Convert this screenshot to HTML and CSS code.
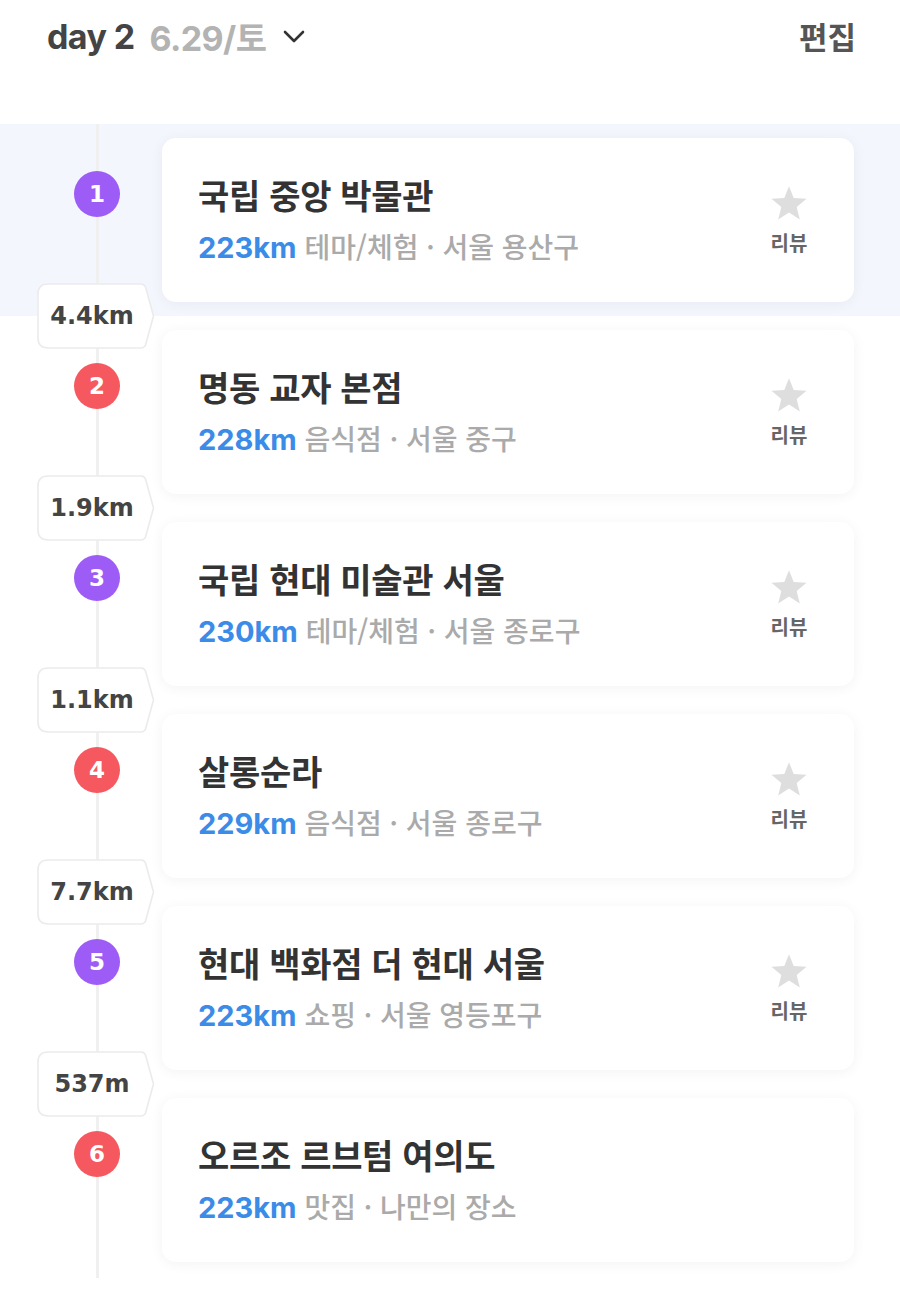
FILE: index.html
```html
<!DOCTYPE html>
<html lang="ko">
<head>
    <meta charset="UTF-8">
    <meta name="viewport" content="width=device-width, initial-scale=1.0">
    <title>day 2 - 일정</title>
    <link rel="stylesheet" href="styles.css">
</head>
<body>
    <header class="topbar">
        <div class="day">
            <span class="day-num">day 2</span>
            <span class="day-date">6.29/토</span>
            <svg class="chevron" width="22" height="14" viewBox="0 0 22 14"><path d="M2 2 L11 11 L20 2" fill="none" stroke="#333" stroke-width="2.6" stroke-linecap="round" stroke-linejoin="round"/></svg>
        </div>
        <a class="edit" href="#">편집</a>
    </header>

    <section class="route">
        <div class="stop active">
            <span class="pin purple">1</span>
            <div class="card">
                <div class="info">
                    <h3>국립 중앙 박물관</h3>
                    <p><b>223km</b> 테마/체험 · 서울 용산구</p>
                </div>
                <div class="review">
                    <svg width="38" height="36" viewBox="0 0 24 23"><path d="M12 0.8 L15 8.3 L23.2 8.8 L16.9 14 L18.9 22 L12 17.6 L5.1 22 L7.1 14 L0.8 8.8 L9 8.3 Z" fill="#dedede"/></svg>
                    <span>리뷰</span>
                </div>
            </div>
        </div>
        <div class="leg"><span class="dist"><svg viewBox="0 0 118 66"><path d="M11 1 H104 Q107 1 108.5 4 L116.5 33 L108.5 62 Q107 65 104 65 H11 Q1 65 1 55 V11 Q1 1 11 1 Z" fill="#fff" stroke="#ebebeb" stroke-width="1.6"/></svg><em>4.4km</em></span></div>

        <div class="stop">
            <span class="pin red">2</span>
            <div class="card">
                <div class="info">
                    <h3>명동 교자 본점</h3>
                    <p><b>228km</b> 음식점 · 서울 중구</p>
                </div>
                <div class="review">
                    <svg width="38" height="36" viewBox="0 0 24 23"><path d="M12 0.8 L15 8.3 L23.2 8.8 L16.9 14 L18.9 22 L12 17.6 L5.1 22 L7.1 14 L0.8 8.8 L9 8.3 Z" fill="#dedede"/></svg>
                    <span>리뷰</span>
                </div>
            </div>
        </div>
        <div class="leg"><span class="dist"><svg viewBox="0 0 118 66"><path d="M11 1 H104 Q107 1 108.5 4 L116.5 33 L108.5 62 Q107 65 104 65 H11 Q1 65 1 55 V11 Q1 1 11 1 Z" fill="#fff" stroke="#ebebeb" stroke-width="1.6"/></svg><em>1.9km</em></span></div>

        <div class="stop">
            <span class="pin purple">3</span>
            <div class="card">
                <div class="info">
                    <h3>국립 현대 미술관 서울</h3>
                    <p><b>230km</b> 테마/체험 · 서울 종로구</p>
                </div>
                <div class="review">
                    <svg width="38" height="36" viewBox="0 0 24 23"><path d="M12 0.8 L15 8.3 L23.2 8.8 L16.9 14 L18.9 22 L12 17.6 L5.1 22 L7.1 14 L0.8 8.8 L9 8.3 Z" fill="#dedede"/></svg>
                    <span>리뷰</span>
                </div>
            </div>
        </div>
        <div class="leg"><span class="dist"><svg viewBox="0 0 118 66"><path d="M11 1 H104 Q107 1 108.5 4 L116.5 33 L108.5 62 Q107 65 104 65 H11 Q1 65 1 55 V11 Q1 1 11 1 Z" fill="#fff" stroke="#ebebeb" stroke-width="1.6"/></svg><em>1.1km</em></span></div>

        <div class="stop">
            <span class="pin red">4</span>
            <div class="card">
                <div class="info">
                    <h3>살롱순라</h3>
                    <p><b>229km</b> 음식점 · 서울 종로구</p>
                </div>
                <div class="review">
                    <svg width="38" height="36" viewBox="0 0 24 23"><path d="M12 0.8 L15 8.3 L23.2 8.8 L16.9 14 L18.9 22 L12 17.6 L5.1 22 L7.1 14 L0.8 8.8 L9 8.3 Z" fill="#dedede"/></svg>
                    <span>리뷰</span>
                </div>
            </div>
        </div>
        <div class="leg"><span class="dist"><svg viewBox="0 0 118 66"><path d="M11 1 H104 Q107 1 108.5 4 L116.5 33 L108.5 62 Q107 65 104 65 H11 Q1 65 1 55 V11 Q1 1 11 1 Z" fill="#fff" stroke="#ebebeb" stroke-width="1.6"/></svg><em>7.7km</em></span></div>

        <div class="stop">
            <span class="pin purple">5</span>
            <div class="card">
                <div class="info">
                    <h3>현대 백화점 더 현대 서울</h3>
                    <p><b>223km</b> 쇼핑 · 서울 영등포구</p>
                </div>
                <div class="review">
                    <svg width="38" height="36" viewBox="0 0 24 23"><path d="M12 0.8 L15 8.3 L23.2 8.8 L16.9 14 L18.9 22 L12 17.6 L5.1 22 L7.1 14 L0.8 8.8 L9 8.3 Z" fill="#dedede"/></svg>
                    <span>리뷰</span>
                </div>
            </div>
        </div>
        <div class="leg"><span class="dist"><svg viewBox="0 0 118 66"><path d="M11 1 H104 Q107 1 108.5 4 L116.5 33 L108.5 62 Q107 65 104 65 H11 Q1 65 1 55 V11 Q1 1 11 1 Z" fill="#fff" stroke="#ebebeb" stroke-width="1.6"/></svg><em>537m</em></span></div>

        <div class="stop">
            <span class="pin red">6</span>
            <div class="card">
                <div class="info">
                    <h3>오르조 르브텀 여의도</h3>
                    <p><b>223km</b> 맛집 · 나만의 장소</p>
                </div>
            </div>
        </div>
    </section>
</body>
</html>
```

FILE: styles.css
```css
* {
    box-sizing: border-box;
}

body {
    font-family: 'Noto Sans CJK KR', 'Noto Sans', sans-serif;
    margin: 0;
    padding: 0;
    background: #fff;
    color: #333;
}

.topbar {
    height: 124px;
    padding: 14px 44px 0 47px;
    display: flex;
    justify-content: space-between;
    align-items: flex-start;
}

.day {
    display: flex;
    align-items: center;
    gap: 15px;
    height: 44px;
}

.day-num,
.day-date {
    font-family: Inter, 'Noto Sans CJK KR', sans-serif;
    font-size: 34px;
    font-weight: 700;
    letter-spacing: -0.6px;
}

.day-num { color: #444; }
.day-date { color: #b3b3b3; }

.chevron {
    margin-left: 2px;
    margin-top: 2px;
}

.edit {
    font-size: 31px;
    font-weight: 700;
    color: #555;
    text-decoration: none;
    line-height: 44px;
}

.route {
    position: relative;
    padding-bottom: 36px;
}

.route::before {
    content: '';
    position: absolute;
    left: 96px;
    top: 0;
    width: 3px;
    height: 1154px;
    background: #f0f0f0;
}

.stop {
    display: flex;
    align-items: flex-start;
    padding: 14px 46px 14px 74px;
}

.stop.active {
    background: #f3f6fd;
}

.pin {
    position: relative;
    z-index: 1;
    width: 46px;
    height: 46px;
    margin-top: 33px;
    margin-right: 42px;
    flex-shrink: 0;
    border-radius: 50%;
    color: #fff;
    font-family: 'DejaVu Sans', sans-serif;
    font-weight: 700;
    font-size: 23px;
    display: flex;
    align-items: center;
    justify-content: center;
}

.purple { background: #9d5cf5; }
.red { background: #f6585f; }

.card {
    flex: 1;
    height: 164px;
    background: #fff;
    border-radius: 14px;
    box-shadow: 0 2px 14px rgba(0, 0, 0, 0.05);
    display: flex;
    align-items: center;
    justify-content: space-between;
    padding: 0 30px 0 36px;
}

.info h3 {
    margin: 0 0 12px;
    font-size: 34px;
    line-height: 42px;
    font-weight: 600;
    color: #333;
    letter-spacing: -0.3px;
}

.info p {
    margin: 0;
    font-size: 28px;
    line-height: 36px;
    color: #aaa;
    font-weight: 500;
}

.info b {
    font-family: Inter, 'Noto Sans CJK KR', sans-serif;
    color: #3a8ce8;
    font-weight: 700;
    font-size: 29px;
}

.review {
    width: 70px;
    display: flex;
    flex-direction: column;
    align-items: center;
    gap: 8px;
    margin-top: 2px;
}

.review span {
    font-size: 20px;
    line-height: 28px;
    font-weight: 700;
    color: #666;
}

.leg {
    height: 0;
    display: flex;
    align-items: center;
    padding-left: 37px;
}

.dist {
    position: relative;
    z-index: 1;
    width: 118px;
    height: 66px;
    flex-shrink: 0;
    display: flex;
    align-items: center;
}

.dist svg {
    position: absolute;
    left: 0;
    top: 0;
    width: 118px;
    height: 66px;
}

.dist em {
    position: relative;
    width: 110px;
    text-align: center;
    font-style: normal;
    font-family: 'DejaVu Sans', sans-serif;
    font-weight: 700;
    font-size: 24px;
    color: #444;
}
```
